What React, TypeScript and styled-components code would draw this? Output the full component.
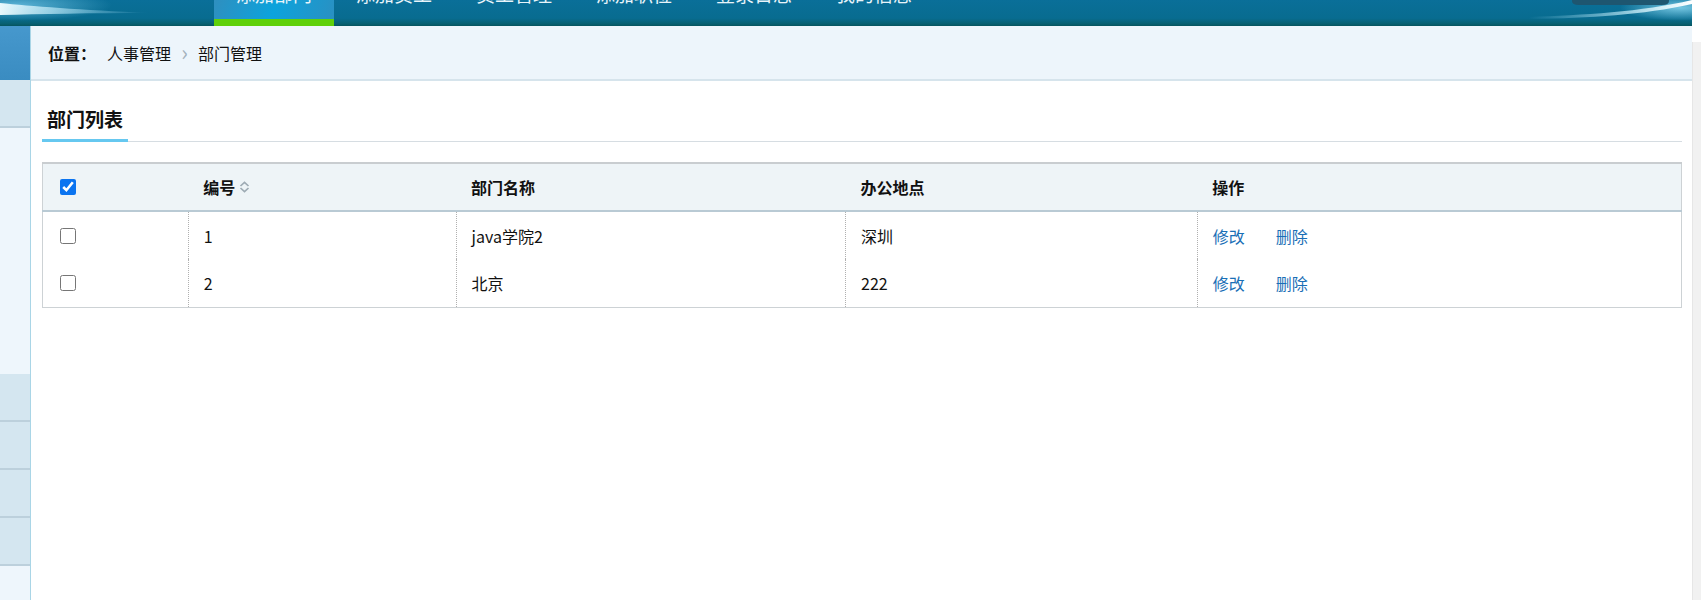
import React from 'react';
import styled, { createGlobalStyle } from 'styled-components';

const GlobalStyle = createGlobalStyle`
    html, body {
        margin: 0;
        padding: 0;
        height: 100%;
        overflow: hidden;
        background: #fff;
    }
    body {
        font-family: "Noto Sans CJK SC", "Noto Sans", sans-serif;
        color: #111;
    }
    #root {
        height: 100%;
    }
`;

const navItems = ['添加部门', '添加员工', '员工管理', '添加职位', '登录日志', '我的信息'];

const departments = [
    { id: 1, name: 'java学院2', place: '深圳' },
    { id: 2, name: '北京', place: '222' },
];

// side menu blocks, top to bottom
const sideBlocks: { kind: 'head' | 'item' | 'plain'; height: number }[] = [
    { kind: 'head', height: 54 },
    { kind: 'item', height: 48 },
    { kind: 'plain', height: 246 },
    { kind: 'item', height: 48 },
    { kind: 'item', height: 48 },
    { kind: 'item', height: 48 },
    { kind: 'item', height: 48 },
];

function LeftSwoosh() {
    return (
        <svg width="214" height="26" viewBox="0 0 214 26">
            <defs>
                <linearGradient id="lsw" x1="0" x2="1" y1="0" y2="0">
                    <stop offset="0" stopColor="#f2fdff" stopOpacity="0.95" />
                    <stop offset="0.35" stopColor="#bfeaf8" stopOpacity="0.7" />
                    <stop offset="1" stopColor="#8fd2ee" stopOpacity="0" />
                </linearGradient>
                <radialGradient id="lglow" cx="0.1" cy="0.2" r="0.6">
                    <stop offset="0" stopColor="#7fd0f0" stopOpacity="0.7" />
                    <stop offset="1" stopColor="#7fd0f0" stopOpacity="0" />
                </radialGradient>
            </defs>
            <rect x="0" y="0" width="160" height="26" fill="url(#lglow)" />
            <path d="M0 3 C30 6 80 10 150 13 C90 13 40 14 0 15 Z" fill="url(#lsw)" />
        </svg>
    );
}

function RightSwoosh() {
    return (
        <svg width="180" height="26" viewBox="0 0 180 26">
            <defs>
                <linearGradient id="rsw" x1="0" x2="1" y1="0" y2="0">
                    <stop offset="0" stopColor="#9fdcf2" stopOpacity="0" />
                    <stop offset="0.6" stopColor="#c9f0fb" stopOpacity="0.7" />
                    <stop offset="1" stopColor="#ffffff" stopOpacity="1" />
                </linearGradient>
                <radialGradient id="rglow" cx="0.9" cy="0.3" r="0.5">
                    <stop offset="0" stopColor="#8fdcf5" stopOpacity="0.8" />
                    <stop offset="1" stopColor="#8fdcf5" stopOpacity="0" />
                </radialGradient>
            </defs>
            <rect x="60" y="0" width="120" height="26" fill="url(#rglow)" />
            <path d="M60 0 H157 V1 Q157 5 150 5 H67 Q60 5 60 1 Z" fill="#1e5670" />
            <path d="M17 17 C70 15 130 12 180 0 L180 4 C130 15 80 18 17 19 Z" fill="url(#rsw)" />
        </svg>
    );
}

function SortIcon() {
    return (
        <svg width="11" height="12" viewBox="0 0 11 12">
            <polyline points="1.5,5 5.5,1.3 9.5,5" fill="none" stroke="#9eabb4" strokeWidth="1.7" />
            <polyline points="1.5,7 5.5,10.7 9.5,7" fill="none" stroke="#9eabb4" strokeWidth="1.7" />
        </svg>
    );
}

function App() {
    return (
        <>
            <GlobalStyle />
            <Screen>
                <Page>
                    <Header>
                        <LeftSwoosh />
                        <Nav>
                            {navItems.map((item, index) => (
                                <NavItem key={item} $active={index === 0}>
                                    <span>{item}</span>
                                </NavItem>
                            ))}
                        </Nav>
                        <HeaderRight>
                            <RightSwoosh />
                        </HeaderRight>
                    </Header>
                    <Body>
                        <Sidebar>
                            {sideBlocks.map((block, index) => (
                                <SideBlock key={index} $kind={block.kind} $height={block.height} />
                            ))}
                        </Sidebar>
                        <Main>
                            <Breadcrumb>
                                <strong>位置：</strong>
                                <span>人事管理</span>
                                <Crumb>›</Crumb>
                                <span>部门管理</span>
                            </Breadcrumb>
                            <Content>
                                <TabBar>
                                    <TabItem>部门列表</TabItem>
                                </TabBar>
                                <Table>
                                    <colgroup>
                                        <col style={{ width: '8.9%' }} />
                                        <col style={{ width: '16.33%' }} />
                                        <col style={{ width: '23.77%' }} />
                                        <col style={{ width: '21.45%' }} />
                                        <col />
                                    </colgroup>
                                    <thead>
                                        <tr>
                                            <CheckCell as="th">
                                                <CheckBox type="checkbox" defaultChecked />
                                            </CheckCell>
                                            <th>
                                                <SortLabel>编号<SortIcon /></SortLabel>
                                            </th>
                                            <th>部门名称</th>
                                            <th>办公地点</th>
                                            <th>操作</th>
                                        </tr>
                                    </thead>
                                    <tbody>
                                        {departments.map((dept) => (
                                            <tr key={dept.id}>
                                                <CheckCell>
                                                    <CheckBox type="checkbox" />
                                                </CheckCell>
                                                <td>{dept.id}</td>
                                                <td>{dept.name}</td>
                                                <td>{dept.place}</td>
                                                <td>
                                                    <Actions>
                                                        <ActionLink href="#">修改</ActionLink>
                                                        <ActionLink href="#">删除</ActionLink>
                                                    </Actions>
                                                </td>
                                            </tr>
                                        ))}
                                    </tbody>
                                </Table>
                            </Content>
                        </Main>
                    </Body>
                </Page>
                <ScrollTrack />
            </Screen>
        </>
    );
}


const Screen = styled.div`
    display: flex;
    height: 600px;
`;

const Page = styled.div`
    flex: 1;
    display: flex;
    flex-direction: column;
    min-width: 0;
`;

const ScrollTrack = styled.div`
    width: 8px;
    margin-top: 42px;
    background: #f1f1f1;
    border-left: 1px solid #e6e6e6;
`;

const Header = styled.div`
    height: 26px;
    display: flex;
    overflow: hidden;
    background: linear-gradient(to bottom, #0a6f99 0%, #086c90 70%, #075f70 92%, #06545e 100%);
`;

const Nav = styled.div`
    display: flex;
`;

const NavItem = styled.div<{ $active?: boolean }>`
    width: 120px;
    height: 26px;
    box-sizing: border-box;
    display: flex;
    justify-content: center;
    align-items: flex-end;
    overflow: hidden;
    padding-bottom: 16px;
    color: #e8f4fa;
    font-size: 19px;
    line-height: 19px;
    background: ${(p) => p.$active
        ? 'linear-gradient(110deg, #2f8fbf 0%, #0ca3dc 50%, #2a90c2 100%)'
        : 'transparent'};
    border-bottom: 7px solid ${(p) => p.$active ? '#5fd00a' : 'transparent'};
`;

const HeaderRight = styled.div`
    margin-left: auto;
    display: flex;
`;

const Body = styled.div`
    flex: 1;
    display: flex;
    min-height: 0;
`;

const Sidebar = styled.div`
    width: 30px;
    background: #eef6fc;
    border-right: 1px solid #a9d5e6;
    display: flex;
    flex-direction: column;
`;

const SideBlock = styled.div<{ $kind: 'head' | 'item' | 'plain'; $height: number }>`
    height: ${(p) => p.$height}px;
    box-sizing: border-box;
    flex-shrink: 0;
    background: ${(p) => p.$kind === 'head'
        ? 'linear-gradient(to bottom, #4698cd, #3a8cc1)'
        : p.$kind === 'item' ? '#d4e6f0' : '#eef6fc'};
    border-bottom: ${(p) => p.$kind === 'item' ? '2px solid #bcd0dc' : 'none'};
`;

const Main = styled.div`
    flex: 1;
    min-width: 0;
    display: flex;
    flex-direction: column;
`;

const Breadcrumb = styled.div`
    height: 53px;
    background: #edf5fb;
    border-bottom: 2px solid #d6e4ec;
    display: flex;
    align-items: center;
    padding-left: 17px;
    font-size: 16px;
    color: #111;

    strong {
        font-weight: 700;
        margin-right: 11px;
    }
`;

const Crumb = styled.span`
    width: 27px;
    text-align: center;
    color: #a3b1bb;
    font-size: 22px;
    line-height: 16px;
    margin-top: -3px;
`;

const Content = styled.div`
    padding: 16px 10px 0 11px;
`;

const TabBar = styled.div`
    display: flex;
    border-bottom: 1px solid #d6dde2;
`;

const TabItem = styled.div`
    padding: 8px 5px 6px;
    font-size: 19px;
    line-height: 28px;
    font-weight: 700;
    color: #111;
    border-bottom: 3px solid #66c8f0;
    margin-bottom: -1px;
`;

const Table = styled.table`
    width: 100%;
    margin-top: 20px;
    border-collapse: collapse;
    table-layout: fixed;
    border: 1px solid #cdd2d5;
    border-top: 2px solid #c9cdd0;
    font-size: 16px;

    th {
        height: 46px;
        padding: 0 15px;
        text-align: left;
        font-weight: 700;
        background: #eef4f7;
        border-bottom: 2px solid #b9cad4;
    }

    td {
        height: 48px;
        padding: 0 15px;
        box-sizing: border-box;
    }

    tbody td + td {
        border-left: 1px dotted #b0b0b0;
    }
`;

const CheckCell = styled.td`
    && {
        padding-left: 17px;
    }
`;

const CheckBox = styled.input`
    width: 16px;
    height: 16px;
    margin: 0;
    display: block;
    accent-color: #0b74f0;
`;

const SortLabel = styled.span`
    display: inline-flex;
    align-items: center;
    gap: 4px;
`;

const Actions = styled.div`
    display: flex;
    gap: 31px;
`;

const ActionLink = styled.a`
    color: #1a6fb6;
    text-decoration: none;
`;


export default App;
